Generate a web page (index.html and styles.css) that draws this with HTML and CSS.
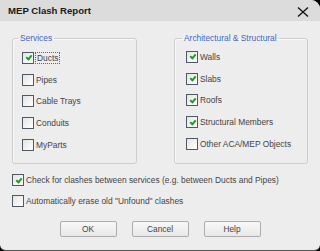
FILE: index.html
```html
<!DOCTYPE html>
<html lang="en">
<head>
    <meta charset="UTF-8">
    <title>MEP Clash Report</title>
    <link rel="stylesheet" href="styles.css">
</head>
<body>

    <div class="dialog">
        <div class="titlebar">
            <span class="title">MEP Clash Report</span>
            <svg class="close" width="12" height="10" viewBox="0 0 12 10">
                <path d="M1 0.5 L11 9.5 M11 0.5 L1 9.5" stroke="#111" stroke-width="1.3" fill="none"/>
            </svg>
        </div>

        <div class="content">
            <div class="groups">
                <fieldset class="group group-left">
                    <legend>Services</legend>
                    <div class="row"><span class="box checked"></span><span class="focus">Ducts</span></div>
                    <div class="row"><span class="box"></span>Pipes</div>
                    <div class="row"><span class="box"></span>Cable Trays</div>
                    <div class="row"><span class="box"></span>Conduits</div>
                    <div class="row"><span class="box"></span>MyParts</div>
                </fieldset>

                <fieldset class="group group-right">
                    <legend>Architectural &amp; Structural</legend>
                    <div class="row"><span class="box checked"></span>Walls</div>
                    <div class="row"><span class="box checked"></span>Slabs</div>
                    <div class="row"><span class="box checked"></span>Roofs</div>
                    <div class="row"><span class="box checked"></span>Structural Members</div>
                    <div class="row"><span class="box"></span>Other ACA/MEP Objects</div>
                </fieldset>
            </div>

            <div class="options">
                <div class="row"><span class="box checked"></span>Check for clashes between services (e.g. between Ducts and Pipes)</div>
                <div class="row"><span class="box"></span>Automatically erase old "Unfound" clashes</div>
            </div>

            <div class="buttons">
                <button>OK</button>
                <button>Cancel</button>
                <button>Help</button>
            </div>
        </div>
    </div>

</body>
</html>
```

FILE: styles.css
```css
html {
    background: #000;
}
body {
    margin: 0;
    padding: 0;
    font-family: 'Liberation Sans', Arial, sans-serif;
    font-size: 8.4px;
    color: #444;
}
.dialog {
    width: 320px;
    height: 251px;
    background: #ededed;
    border-radius: 0 9px 6px 6px;
    border-bottom: 1px solid #555;
    box-sizing: border-box;
    overflow: hidden;
}
.titlebar {
    height: 21px;
    background: #dcdcdc;
    display: flex;
    align-items: center;
    justify-content: space-between;
    padding: 0 11px 0 8px;
}
.title {
    font-size: 9.6px;
    font-weight: bold;
    color: #1a1a1a;
}
.close {
    margin-top: 3px;
}
.content {
    padding: 12px 12px 0 12px;
}
.groups {
    display: flex;
    justify-content: space-between;
}
.group {
    margin: 0;
    border: 1px solid #cdcdcd;
    box-shadow: inset 1px 1px 0 #fafafa;
    border-radius: 3px;
    padding: 4px 0 7px 9px;
}
.group legend {
    color: #4064c4;
    padding: 0 2px;
    margin-left: -4px;
    line-height: 10px;
}
.group-left {
    width: 125px;
    box-sizing: border-box;
}
.group-right {
    width: 134px;
    box-sizing: border-box;
    padding-top: 3px;
    padding-left: 11px;
}
.row {
    height: 21.75px;
    display: flex;
    align-items: center;
    white-space: nowrap;
}
.box {
    width: 10px;
    height: 10px;
    border: 1px solid #4f5865;
    background: linear-gradient(135deg, #e4e4e4, #ffffff);
    margin-right: 2px;
    flex: none;
    position: relative;
}
.box.checked::after {
    content: "";
    position: absolute;
    left: 3.5px;
    top: 1.5px;
    width: 2px;
    height: 4px;
    border: solid #1f9c2a;
    border-width: 0 2px 2px 0;
    transform: rotate(40deg);
}
.focus {
    outline: 1px dotted #666;
    padding: 0 1px;
}
.options {
    margin-top: 6px;
}
.options .row {
    height: 21px;
}
.buttons {
    display: flex;
    justify-content: center;
    gap: 15px;
    margin-top: 9px;
}
button {
    width: 57px;
    height: 16px;
    border: 1px solid #adadad;
    border-radius: 2px;
    background: linear-gradient(#f8f8f8, #e8e8e8);
    font-family: 'Liberation Sans', Arial, sans-serif;
    font-size: 8.4px;
    color: #444;
    padding: 0;
}
```
